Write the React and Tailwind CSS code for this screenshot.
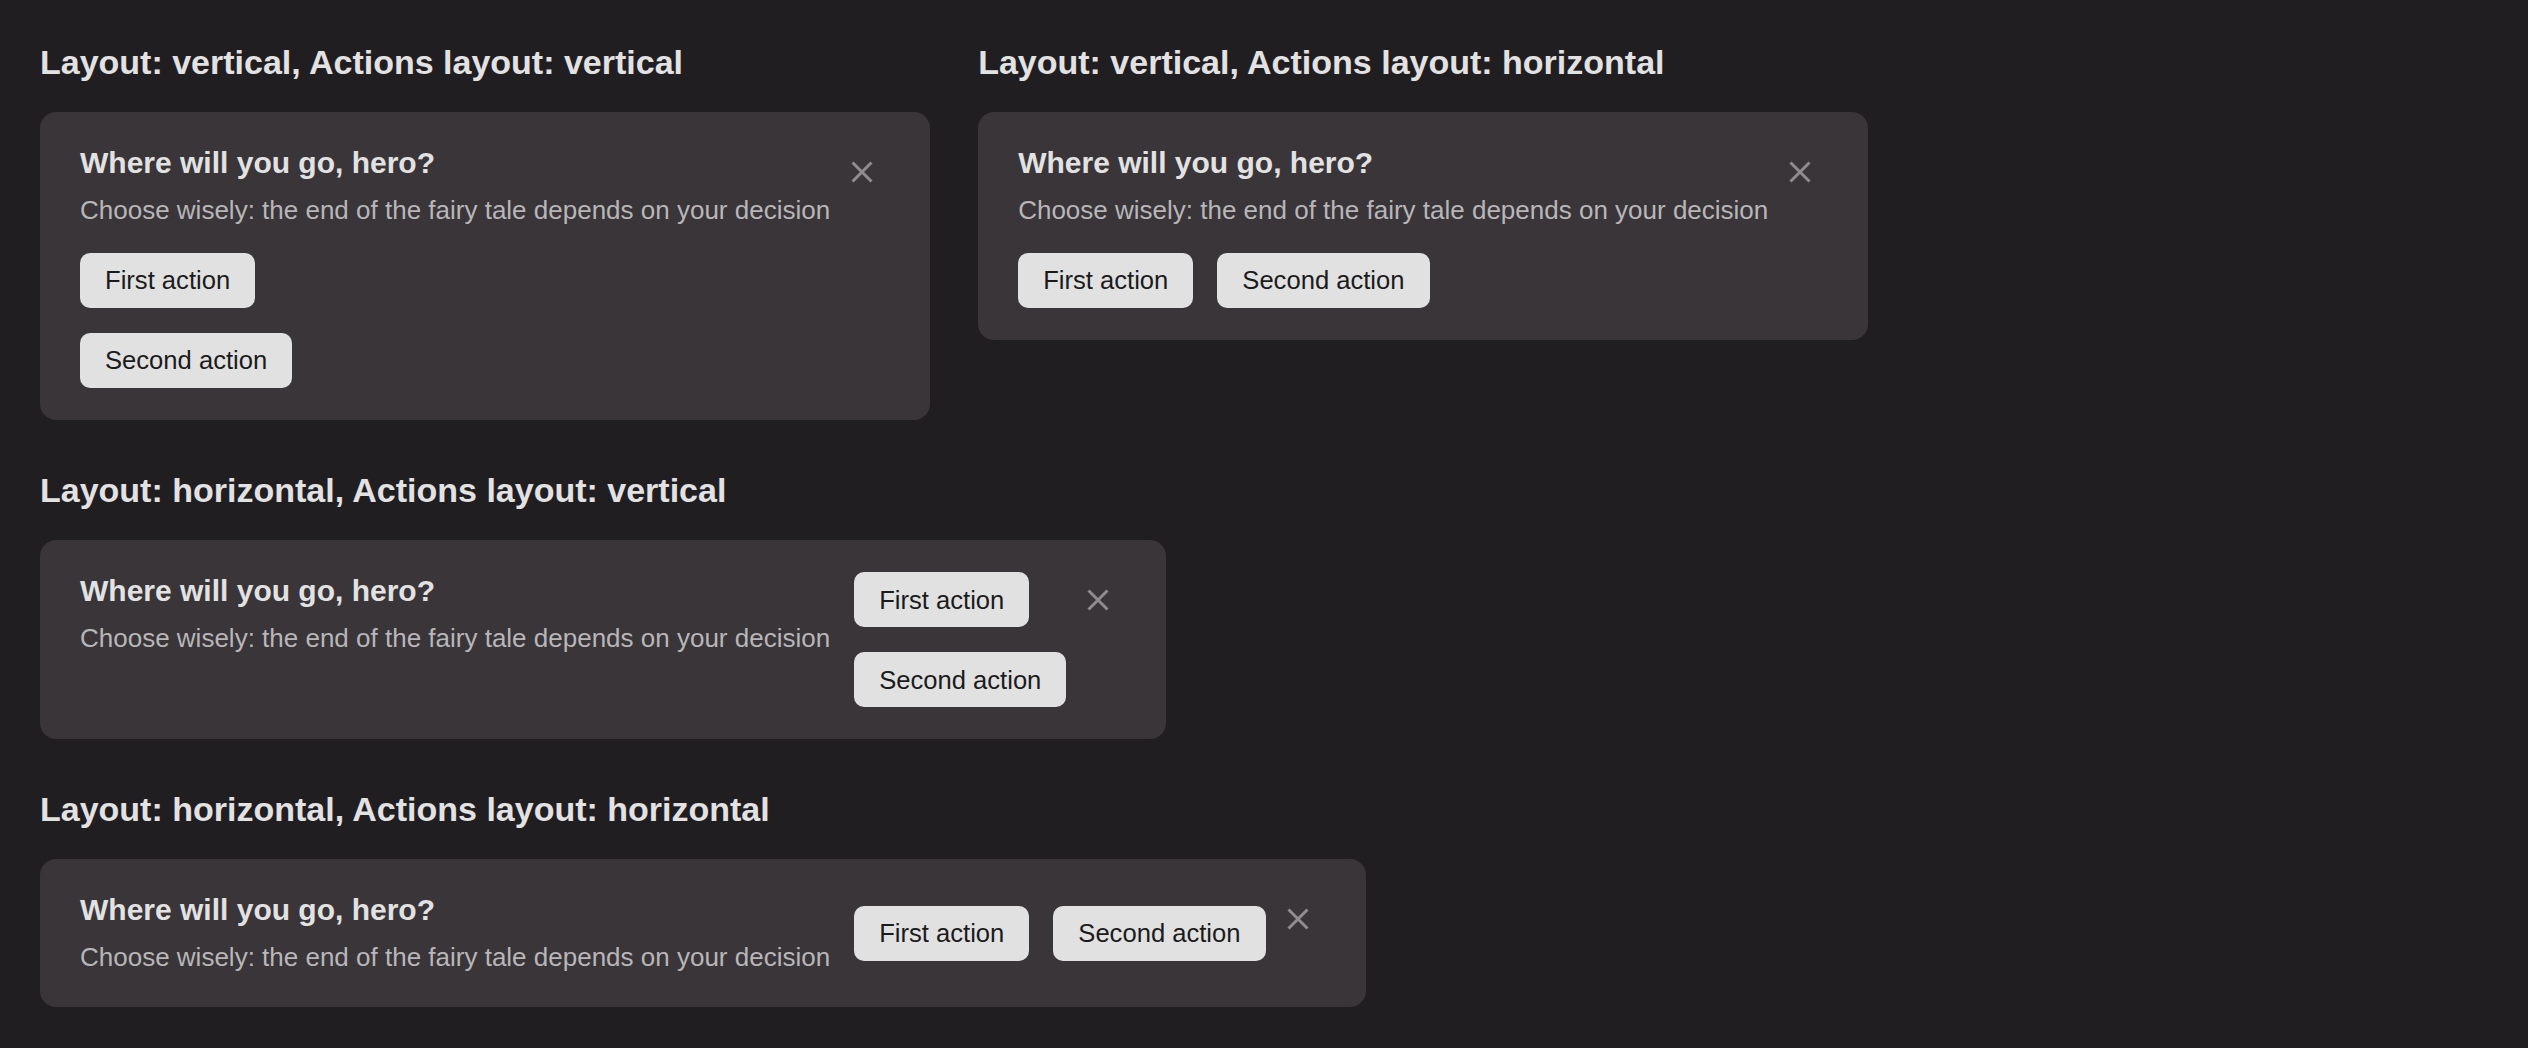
import React from "react";

const font = { fontFamily: '"Liberation Sans", Arial, sans-serif' };

function CloseIcon() {
  return (
    <div className="flex h-[56px] w-[56px] shrink-0 items-center justify-center">
      <svg width="22" height="22" viewBox="0 0 22 22" fill="none">
        <path d="M1.5 1.5 L20.5 20.5 M20.5 1.5 L1.5 20.5" stroke="#8f8d8f" strokeWidth="3" />
      </svg>
    </div>
  );
}

function Btn({ children }) {
  return (
    <button className="shrink-0 whitespace-nowrap rounded-[10px] bg-[#e1e1e1] px-[25px] py-[12.7px] text-[25.6px] leading-[30px] text-[#1c1b1c]">
      {children}
    </button>
  );
}

function TextBlock() {
  return (
    <div className="shrink-0 whitespace-nowrap">
      <div className="text-[30px] font-bold leading-[38px] text-[#e3e2e3]">Where will you go, hero?</div>
      <div className="mt-[10px] text-[26px] leading-[36px] text-[#b8b6b8]">
        Choose wisely: the end of the fairy tale depends on your decision
      </div>
    </div>
  );
}

function Actions({ dir }) {
  return (
    <div className={dir === "vertical" ? "flex flex-col items-start gap-[24.6px]" : "flex flex-row items-center gap-[24px]"}>
      <Btn>First action</Btn>
      <Btn>Second action</Btn>
    </div>
  );
}

function VerticalCard({ actions }) {
  return (
    <div className="w-fit rounded-[16px] bg-[#393538] px-[40px] py-[32px]">
      <div className="flex flex-row items-start gap-[4px]">
        <TextBlock />
        <CloseIcon />
      </div>
      <div className="mt-[24.6px]">
        <Actions dir={actions} />
      </div>
    </div>
  );
}

function HorizontalCard({ actions }) {
  return (
    <div className="flex w-fit flex-row items-start rounded-[16px] bg-[#393538] px-[40px] py-[32px]">
      <TextBlock />
      <div className={actions === "horizontal" ? "ml-[24px] self-center" : "ml-[24px]"}>
        <Actions dir={actions} />
      </div>
      <div className="ml-[4px]">
        <CloseIcon />
      </div>
    </div>
  );
}

function Section({ title, children }) {
  return (
    <section className="flex flex-col">
      <h2 className="mb-[28px] text-[34px] font-bold leading-[44px] text-[#e3e2e3]">{title}</h2>
      {children}
    </section>
  );
}

export default function App() {
  return (
    <div style={font} className="min-h-[1048px] w-full bg-[#211e22] px-[40px] pt-[40px]">
      <div className="flex flex-col gap-[48px]">
        <div className="flex flex-row gap-[48px]">
          <Section title="Layout: vertical, Actions layout: vertical">
            <VerticalCard actions="vertical" />
          </Section>
          <Section title="Layout: vertical, Actions layout: horizontal">
            <VerticalCard actions="horizontal" />
          </Section>
        </div>
        <Section title="Layout: horizontal, Actions layout: vertical">
          <HorizontalCard actions="vertical" />
        </Section>
        <Section title="Layout: horizontal, Actions layout: horizontal">
          <HorizontalCard actions="horizontal" />
        </Section>
      </div>
    </div>
  );
}
